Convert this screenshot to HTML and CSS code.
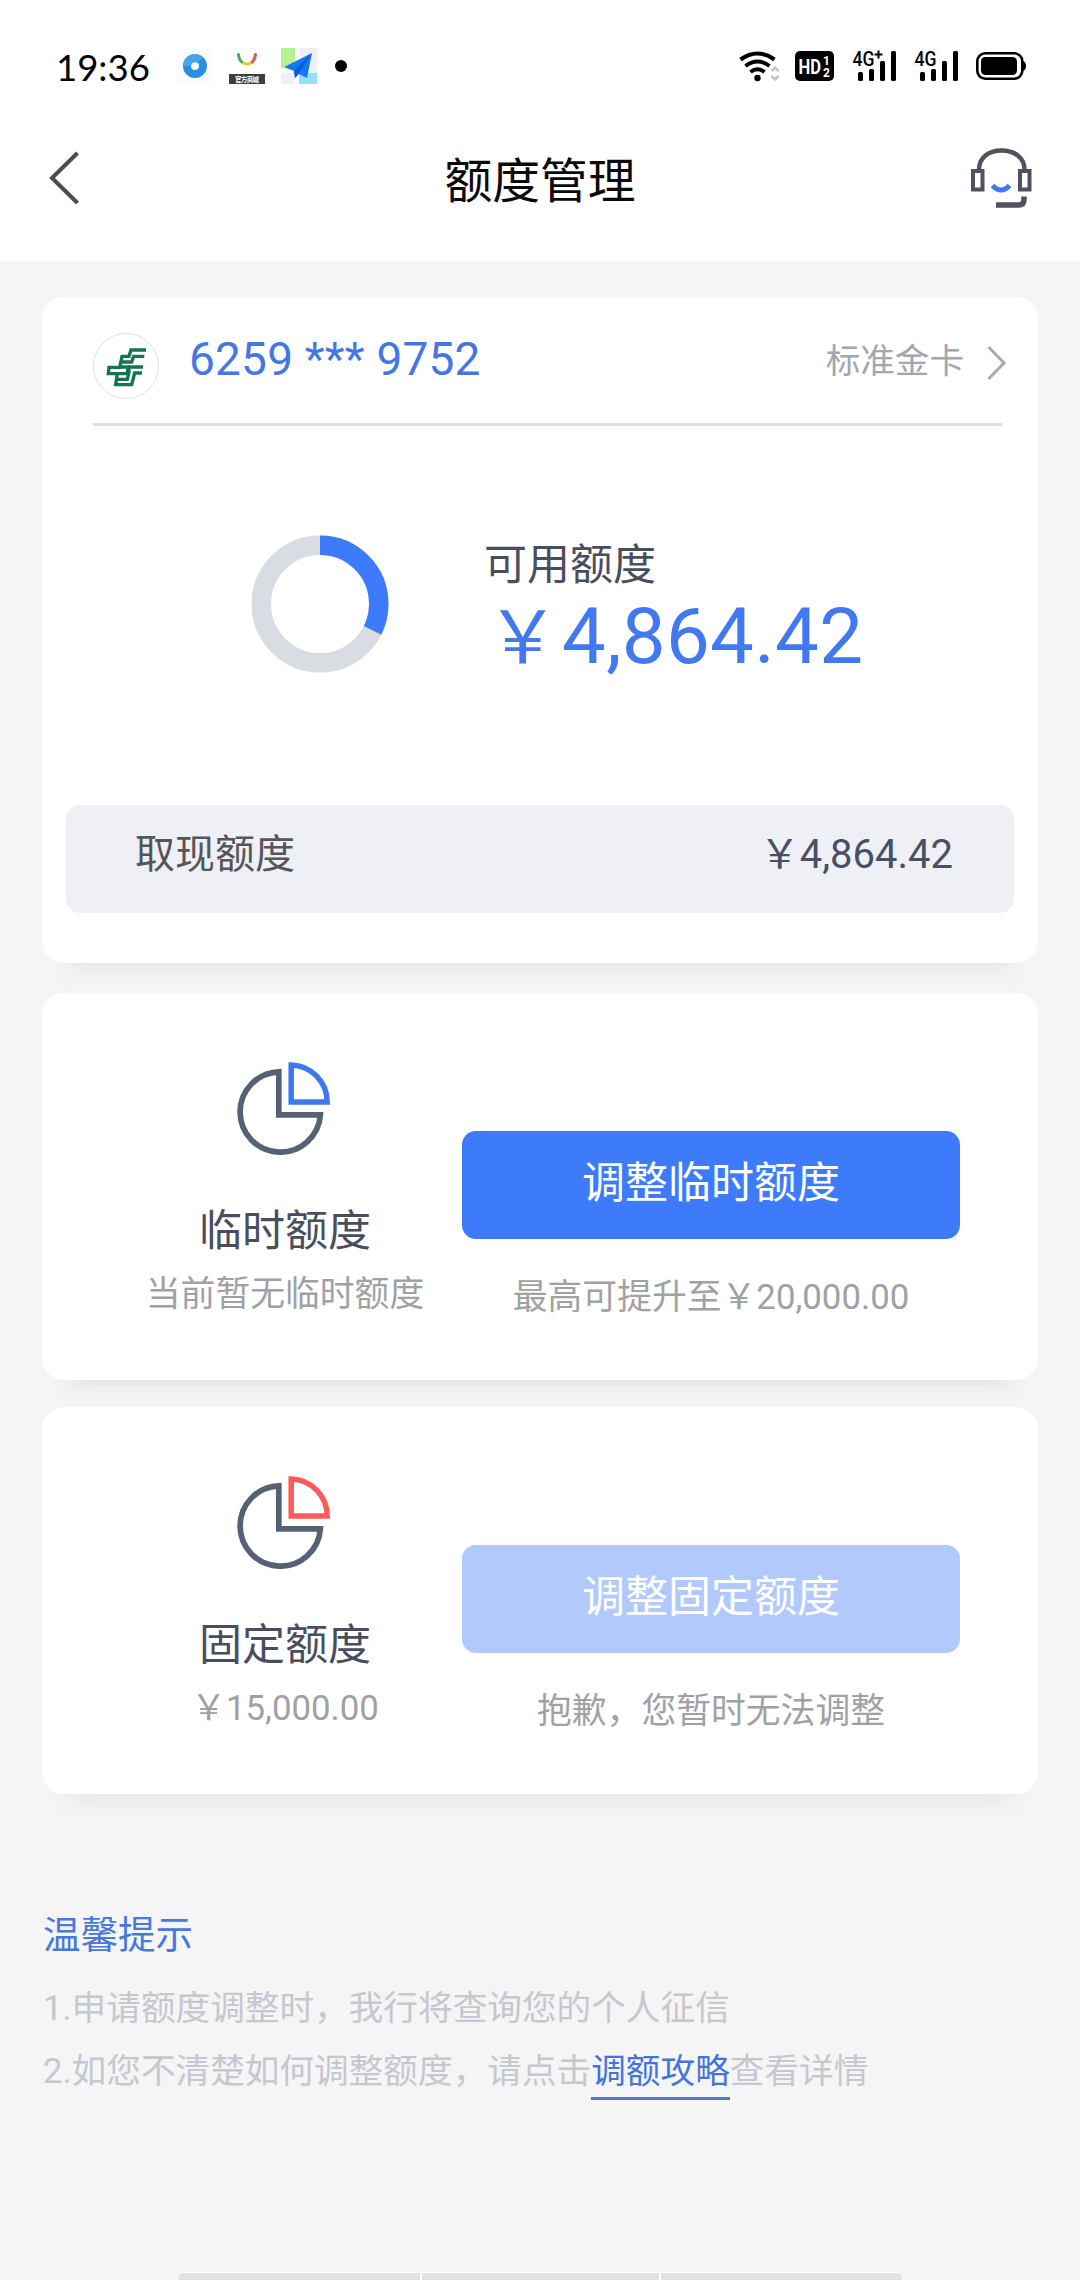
FILE: index.html
```html
<!DOCTYPE html>
<html lang="zh-CN">
<head>
<meta charset="utf-8">
<title>额度管理</title>
<link rel="stylesheet" href="styles.css">
</head>
<body>
<div class="screen">
  <div class="status">
    <span class="time">19:36</span>
    <div class="status-left">
      <svg width="36" height="36" viewBox="0 0 36 36"><rect width="36" height="36" fill="#fbfcfd"/><circle cx="18" cy="18" r="8" fill="none" stroke="#2a8fe0" stroke-width="8"/><path d="M10 18a8 8 0 0 1 13-6" fill="none" stroke="#4aa5e8" stroke-width="8"/></svg>
      <svg width="36" height="36" viewBox="0 0 36 36"><path d="M9.500 6.500q.5 6 4 8" fill="none" stroke="#46a866" stroke-width="3" stroke-linecap="round"/><path d="M26.500 6.500q-.5 5-3.500 8" fill="none" stroke="#dc5a50" stroke-width="3" stroke-linecap="round"/><path d="M13.500 14.500q4.500 3 9 0" fill="none" stroke="#eec42f" stroke-width="3"/><rect y="26" width="36" height="10" fill="#3c403d"/><text x="6" y="33.500" class="mini" textLength="24">官方商城</text></svg>
      <svg width="36" height="36" viewBox="0 0 36 36"><rect width="36" height="36" fill="#edf1f7"/><path d="M0 0h14v14L0 20z" fill="#b5f195"/><path d="M18 25h18v11H18z" fill="#91e0ff"/><path d="M14 0h4v36h-4zM0 22l14-2v4L0 26z" fill="#fff"/><path d="M31 5 3 19l10 4 1 7 4-4 8 4z" fill="#1479ee"/><path d="M31 5 13 23l1 7 4-5z" fill="#0a5ccf"/></svg>
    </div>
    <i class="dot"></i>
    <div class="status-right">
      <svg class="wifi" width="40" height="32" viewBox="0 0 40 32"><g fill="none" stroke="#000" stroke-width="4"><path d="M1.500 9.500q17-12 34 0"/><path d="M6.500 16q12-9 24 0"/><path d="M11.500 22q7-5.500 14 0"/></g><circle cx="18.500" cy="28" r="3.200"/><path d="m32.500 21 3.500-3.500 3.500 3.500M32.500 26l3.500 3.500 3.500-3.500" fill="none" stroke="#c4c4c4" stroke-width="2.500"/></svg>
      <svg class="hd" width="39" height="30" viewBox="0 0 39 30"><rect width="39" height="30" rx="5"/><g fill="#fff" class="st-bold"><text x="3.500" y="22.500" font-size="21" textLength="22.500" lengthAdjust="spacingAndGlyphs">HD</text><text x="28" y="13.500" font-size="12">1</text><text x="28" y="25.500" font-size="12">2</text></g></svg>
      <svg class="sig" width="44" height="40" viewBox="0 -4 44 40"><text class="st-text" x="0.500" y="16" font-size="20" textLength="22" lengthAdjust="spacingAndGlyphs">4G</text><path d="M22.500 4.500h8M26.500.5v8" stroke="#000" stroke-width="2"/><g><rect x="6" y="22" width="5" height="9" rx="1.500"/><rect x="17" y="19" width="5" height="12" rx="1.500"/><rect x="28" y="11" width="5" height="20" rx="1.500"/><rect x="39" y="1" width="5" height="30" rx="1.500"/></g></svg>
      <svg class="sig" width="44" height="40" viewBox="0 -4 44 40"><text class="st-text" x="0.500" y="16" font-size="20" textLength="22" lengthAdjust="spacingAndGlyphs">4G</text><g><rect x="6" y="22" width="5" height="9" rx="1.500"/><rect x="17" y="19" width="5" height="12" rx="1.500"/><rect x="28" y="11" width="5" height="20" rx="1.500"/><rect x="39" y="1" width="5" height="30" rx="1.500"/></g></svg>
      <svg width="50" height="28" viewBox="0 0 50 28"><rect x="1.300" y="1.300" width="45" height="25.400" rx="8" fill="none" stroke="#000" stroke-width="2.600"/><rect x="5" y="5" width="36" height="18" rx="4.500"/><path d="M47 9q3 1 3 5t-3 5z"/></svg>
    </div>
  </div>

  <header class="nav">
    <svg width="32" height="54" viewBox="0 0 32 54"><path d="M29.500 2 4 27l25.500 25" fill="none" stroke="#4b4c50" stroke-width="4"/></svg>
    <h1>额度管理</h1>
    <svg width="62" height="62" viewBox="0 0 62 62"><g fill="none" stroke="#50525f"><path d="M9 22.500C9 11 18 3.500 31.500 3.500S54.500 11 54.500 22.500" stroke-width="4.500"/><rect x="3" y="24" width="9.500" height="18.500" stroke-width="4"/><rect x="50" y="24" width="9.500" height="18.500" stroke-width="4"/><path d="M54 49.500v3q0 5.500-5.500 5.500H26" stroke-width="5.500"/></g><path d="M22.500 38.500q8.500 9 17 0" fill="none" stroke="#3f79f7" stroke-width="5"/></svg>
  </header>

  <main>
    <section class="card overview">
      <div class="card-head">
        <span class="logo"><svg width="64" height="64" viewBox="0 0 192 192"><g fill="none" stroke="#14754c" stroke-width="10"><path d="M156 48h-45l-6 19H84l-7 33H45l-2 19h59l4-20h41"/><path d="M151 67h-32l-6 17H80"/><path d="M144 117h-22l-9 35H65l5-34"/><path d="M72 136h28l6-26"/><path d="M78 99h24l-2 20"/></g></svg></span>
        <span class="number">6259 *** 9752</span>
        <span class="level">标准金卡</span>
        <svg class="more" width="21" height="36" viewBox="0 0 21 36"><path d="m2.500 2 15.500 16L2.500 34" fill="none" stroke="#a6a8b2" stroke-width="3"/></svg>
      </div>
      <div class="available">
        <svg width="138" height="138" viewBox="0 0 138 138"><circle cx="69" cy="69" r="58.750" fill="none" stroke="#d9dce2" stroke-width="19.500"/><circle cx="69" cy="69" r="58.750" fill="none" stroke="#3e7bfa" stroke-width="19.500" pathLength="1000" stroke-dasharray="324 676" transform="rotate(-90 69 69)"/></svg>
        <div>
          <p class="available-label">可用额度</p>
          <p class="available-sum"><span class="yen">￥</span>4,864.42</p>
        </div>
      </div>
      <div class="cash"><span>取现额度</span><span class="cash-sum">￥4,864.42</span></div>
    </section>

    <section class="card limit">
      <div class="limit-info">
        <svg class="pie" width="98" height="96" viewBox="0 0 98 96"><path d="M44.800 12.800A40.200 40.200 0 1 0 86.400 55.800H44.800z" fill="none" stroke="#566274" stroke-width="5.700"/><path class="slice-temp" d="M57.200 6V43H93.200A37 37 0 0 0 57.200 6z"/></svg>
        <h2>临时额度</h2>
        <p>当前暂无临时额度</p>
      </div>
      <div class="limit-action">
        <button class="btn">调整临时额度</button>
        <p>最高可提升至￥20,000.00</p>
      </div>
    </section>

    <section class="card limit">
      <div class="limit-info">
        <svg class="pie" width="98" height="96" viewBox="0 0 98 96"><path d="M44.800 12.800A40.200 40.200 0 1 0 86.400 55.800H44.800z" fill="none" stroke="#566274" stroke-width="5.700"/><path class="slice-fixed" d="M57.200 6V43H93.200A37 37 0 0 0 57.200 6z"/></svg>
        <h2>固定额度</h2>
        <p>￥15,000.00</p>
      </div>
      <div class="limit-action">
        <button class="btn btn-off">调整固定额度</button>
        <p>抱歉，您暂时无法调整</p>
      </div>
    </section>

    <section class="tips">
      <h3>温馨提示</h3>
      <p>1.申请额度调整时，我行将查询您的个人征信</p>
      <p>2.如您不清楚如何调整额度，请点击<a class="guide">调额攻略</a>查看详情</p>
    </section>
  </main>
  <div class="homebar"><i></i><i></i><i></i></div>
</div>
</body>
</html>
```
FILE: styles.css
```css
* { box-sizing: border-box; }
body, h1, h2, h3, p { margin: 0; font-weight: 400; }
body {
  background: #f5f5f5;
  font-family: Roboto, "Noto Sans CJK SC", sans-serif;
  color: #4a4d5e;
}
svg { display: block; flex: none; }
.screen {
  width: 1080px;
  height: 2280px;
  overflow: hidden;
  display: flex;
  flex-direction: column;
}

/* Status bar */
.status {
  height: 132px;
  flex: none;
  padding: 0 54px 0 56px;
  display: flex;
  align-items: center;
  background: #fff;
}
.time {
  width: 121px;
  font-family: Lato, sans-serif;
  font-size: 36.500px;
  line-height: 48px;
  color: #000;
  white-space: nowrap;
  padding-top: 2px;
}
.status-left { display: flex; gap: 16px; }
.dot {
  width: 12px;
  height: 12px;
  margin-left: 18px;
  border-radius: 50%;
  background: #000;
}
.status-right { display: flex; align-items: center; margin-left: auto; }
.wifi { margin-right: 16px; }
.hd { margin-right: 18px; }
.sig { margin-right: 18px; }
.st-text { font-family: Roboto, sans-serif; font-weight: 500; }
.st-bold { font-family: Roboto, sans-serif; font-weight: 700; }
.mini { font-family: "Noto Sans CJK SC", sans-serif; font-size: 6.500px; font-weight: 700; fill: #fff; }

/* Title bar */
.nav {
  height: 129px;
  flex: none;
  padding: 14px 48px 0 48px;
  display: grid;
  grid-template-columns: 62px 1fr 62px;
  align-items: start;
  background: #fff;
}
.nav > svg:first-child { margin-top: 5px; }
.nav > svg:last-child { margin-top: 1px; }
.nav h1 {
  padding-top: 1px;
  font-size: 47.800px;
  line-height: 70px;
  text-align: center;
  color: #0a0a0a;
}

/* Cards */
main { padding: 36px 42px 0; flex: 1; }
.card {
  background: #fff;
  border-radius: 22px;
  box-shadow: 0 32px 20px -26px rgba(100, 120, 150, .13);
}
.overview { height: 666px; padding: 36px 24px 0; }
.card-head {
  height: 93px;
  margin: 0 12px 0 27px;
  padding-right: 1px;
  display: flex;
  background: linear-gradient(#dedede, #dedede) left bottom / 909px 3px no-repeat;
}
.logo {
  width: 66px;
  height: 66px;
  border: 1.500px solid #dfe3e2;
  border-radius: 50%;
}
.number {
  margin-left: 30px;
  font-size: 46px;
  line-height: 52px;
  letter-spacing: .2px;
  color: #4577e2;
}
.level {
  margin-left: auto;
  font-size: 34.600px;
  line-height: 56px;
  color: #a4a6ae;
}
.more { margin: 12px -6px 0 22px; }
.available {
  display: flex;
  padding: 109px 0 0 185px;
}
.available > div { margin: 0 0 0 95px; }
.available-label { font-size: 43px; line-height: 60px; }
.available-sum {
  font-size: 78px;
  line-height: 84px;
  letter-spacing: .3px;
  white-space: nowrap;
  color: #4279f0;
}
.yen {
  display: inline-block;
  width: 78px;
  font-size: 73px;
  text-align: center;
}
.cash {
  height: 108px;
  margin-top: 125px;
  padding: 0 61px 0 69px;
  display: flex;
  justify-content: space-between;
  border-radius: 14px;
  background: #eff0f5;
  font-size: 40px;
  line-height: 100px;
  color: #555659;
}
.cash-sum { color: #484f66; }

.limit {
  height: 387px;
  margin-top: 30px;
  display: grid;
  grid-template-columns: 402px 498px;
  column-gap: 18px;
}
.limit + .limit { margin-top: 27px; }
.limit-info { padding: 66px 0 0 84px; text-align: center; }
.pie { margin: 0 0 0 108px; }
.slice-temp, .slice-fixed { fill: none; stroke: #3f77f0; stroke-width: 5.500; }
.slice-fixed { stroke: #fb5b5b; }
.limit h2 {
  margin-top: 46px;
  font-size: 43px;
  line-height: 60px;
}
.limit p {
  font-size: 34.800px;
  line-height: 48px;
  white-space: nowrap;
  color: #9fa1a5;
}
.limit-info p { margin-top: 9px; }
.limit-action { padding-top: 138px; text-align: center; }
.limit-action p { margin-top: 34px; }
.btn {
  display: block;
  width: 498px;
  height: 108px;
  padding: 0 0 4px;
  border: 0;
  border-radius: 14px;
  background: #3e7bfa;
  color: #fff;
  font: 43px/100px Roboto, "Noto Sans CJK SC", sans-serif;
}
.btn-off { background: #b2c9fd; }

/* Tips */
.tips { padding: 112px 1px 0; color: #c6c7cf; }
.tips h3 { margin-bottom: 13px; font-size: 37.500px; line-height: 58px; color: #4678de; }
.tips p { font-size: 34.650px; line-height: 63px; white-space: nowrap; }
.guide {
  padding-bottom: 6px;
  border-bottom: 3px solid #4a78d4;
  color: #4374dc;
}

.homebar {
  width: 723px;
  height: 8px;
  margin: 0 auto;
  display: grid;
  grid-template-columns: 241px 237px 241px;
  gap: 2px;
  flex: none;
  background: #fff;
  border-top: 1px solid #fff;
  border-radius: 5px 5px 0 0;
  overflow: hidden;
}
.homebar i { background: #e2e2e2; }
```
